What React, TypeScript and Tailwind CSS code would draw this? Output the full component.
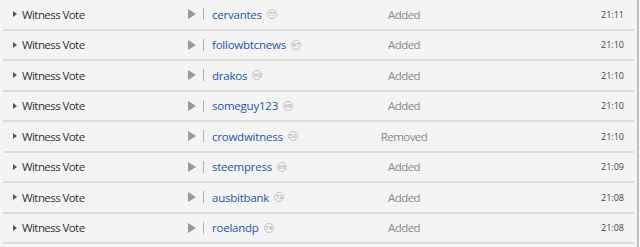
const rows = [
  { user: "cervantes", rep: 77, status: "Added", time: "21:11" },
  { user: "followbtcnews", rep: 67, status: "Added", time: "21:10" },
  { user: "drakos", rep: 69, status: "Added", time: "21:10" },
  { user: "someguy123", rep: 69, status: "Added", time: "21:10" },
  { user: "crowdwitness", rep: 52, status: "Removed", time: "21:10" },
  { user: "steempress", rep: 68, status: "Added", time: "21:09" },
  { user: "ausbitbank", rep: 72, status: "Added", time: "21:08" },
  { user: "roelandp", rep: 74, status: "Added", time: "21:08" },
];

function Caret() {
  return (
    <svg width="4" height="6" viewBox="0 0 4 6" className="shrink-0">
      <path d="M0 0 L4 3 L0 6 Z" fill="#555" />
    </svg>
  );
}

function Play() {
  return (
    <svg width="8" height="10" viewBox="0 0 8 10" className="shrink-0">
      <path d="M0 0 L8 5 L0 10 Z" fill="#9a9a9a" />
    </svg>
  );
}

export default function App() {
  return (
    <div
      className="w-[640px] h-[247px] overflow-hidden bg-white"
      style={{ fontFamily: '"Open Sans", "DejaVu Sans", sans-serif' }}
    >
      <div className="w-[639px] h-full bg-[#f4f4f4] border-r-2 border-[#bdbdbd] px-[3px]">
        {rows.map((r) => (
          <div
            key={r.user}
            className="flex items-center h-[30.5px] border-b-2 border-[#dcdcdc] text-[11.5px] tracking-[-0.05em]"
          >
            <div className="w-[19px] pl-[10px] flex items-center">
              <Caret />
            </div>
            <div className="w-[166px] text-[#333]">Witness Vote</div>
            <Play />
            <div className="w-px h-[12px] bg-[#b0b0b0] ml-[7px] mr-[8px]" />
            <div className="flex-1 flex items-center gap-[5px]">
              <span className="text-[#1d55b3] tracking-[-0.02em]">{r.user}</span>
              <span className="w-[10px] h-[10px] rounded-full border border-[#c4c4c4] flex items-center justify-center text-[6px] leading-none text-[#999] tracking-normal">
                {r.rep}
              </span>
            </div>
            <div className="w-[120px] text-center text-[#8a8a8a]">{r.status}</div>
            <div className="w-[170px] text-right pr-[10px] text-[9px] text-[#444] tracking-normal">
              {r.time}
            </div>
          </div>
        ))}
      </div>
    </div>
  );
}
